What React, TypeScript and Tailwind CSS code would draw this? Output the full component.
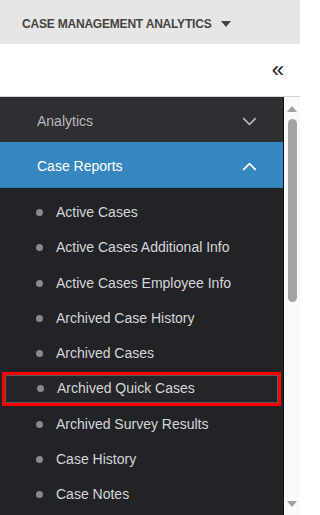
import { ChevronDown, ChevronUp } from "lucide-react"

const reports = [
  "Active Cases",
  "Active Cases Additional Info",
  "Active Cases Employee Info",
  "Archived Case History",
  "Archived Cases",
  "Archived Quick Cases",
  "Archived Survey Results",
  "Case History",
  "Case Notes",
]

export default function App() {
  return (
    <div className="w-[300px] h-[515px] overflow-hidden bg-white font-['Liberation_Sans',Arial,sans-serif]">
      {/* Top bar */}
      <div className="h-[44px] bg-[#e6e6e6] flex items-center pl-[22px] pt-[3px]">
        <span className="text-[12px] font-bold text-[#444] tracking-[-0.2px]">CASE MANAGEMENT ANALYTICS</span>
        <svg width="10" height="6" viewBox="0 0 10 6" className="ml-[10px]">
          <path d="M0 0h10L5 6z" fill="#444" />
        </svg>
      </div>

      {/* Collapse bar */}
      <div className="h-[53px] bg-white flex items-center justify-end pr-[16px] border-b border-[#d5d5d5]">
        <span className="text-[22px] leading-none text-[#222]">«</span>
      </div>

      <div className="flex h-[418px]">
        {/* Nav */}
        <div className="w-[284px] bg-[#222326] border-r border-[#111]">
          <div className="h-[45px] bg-[#2e2f33] flex items-center justify-between pl-[37px] pr-[22px] pt-[4px]">
            <span className="text-[14px] text-[#b9b9bb]">Analytics</span>
            <ChevronDown size={23} strokeWidth={1.6} className="text-[#b9b9bb]" />
          </div>
          <div className="h-[46px] bg-[#3687c0] border-b border-[#2b79b0] flex items-center justify-between pl-[37px] pr-[22px] pt-[4px]">
            <span className="text-[14px] text-white">Case Reports</span>
            <ChevronUp size={23} strokeWidth={1.9} className="text-white" />
          </div>
          <ul className="pt-[7px]">
            {reports.map((r) =>
              r === "Archived Quick Cases" ? (
                <li key={r} className="h-[35.25px] flex items-center px-[2px]">
                  <div className="h-[34px] w-[281px] border-[3px] border-[#ff0000] flex items-stretch">
                    <div className="flex-1 flex items-center border border-[#5a5a5a] bg-[#252629] pl-[31px]">
                      <span className="w-[7px] h-[7px] rounded-full bg-[#8a8a8c]" />
                      <span className="ml-[13px] text-[14px] text-[#d6d6d8]">{r}</span>
                    </div>
                  </div>
                </li>
              ) : (
                <li key={r} className="h-[35.25px] flex items-center pl-[36px]">
                  <span className="w-[7px] h-[7px] rounded-full bg-[#8a8a8c]" />
                  <span className="ml-[13px] text-[14px] text-[#d6d6d8]">{r}</span>
                </li>
              )
            )}
          </ul>
        </div>

        {/* Scrollbar */}
        <div className="flex-1 bg-[#fafafa] flex flex-col items-center">
          <svg width="10" height="6" viewBox="0 0 10 6" className="mt-[9px]">
            <path d="M5 0L10 6H0z" fill="#a0a0a0" />
          </svg>
          <div className="mt-[7px] w-[9px] h-[183px] rounded-full bg-[#a3a3a3]" />
          <div className="flex-1" />
          <svg width="10" height="6" viewBox="0 0 10 6" className="mb-[8px]">
            <path d="M0 0h10L5 6z" fill="#a0a0a0" />
          </svg>
        </div>
      </div>
    </div>
  )
}
